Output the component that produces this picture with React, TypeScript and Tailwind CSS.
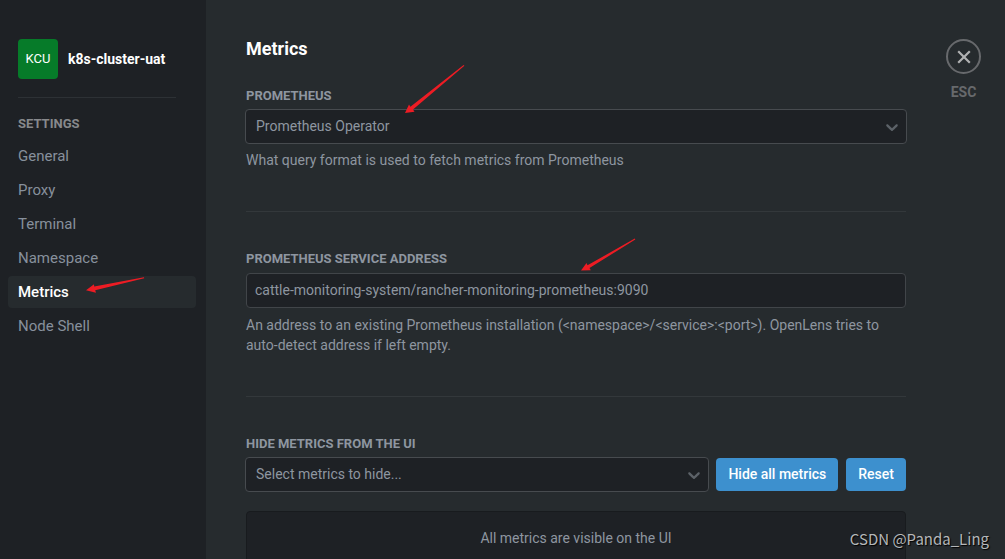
import { useState } from "react";

const navItems = ["General", "Proxy", "Terminal", "Namespace", "Metrics", "Node Shell"];

const Chevron = () => (
    <svg className="absolute right-[5px] top-2 size-5 pointer-events-none fill-[#5c6268]" viewBox="0 0 20 20" aria-hidden="true">
        <path d="M4.516 7.548c0.436-0.446 1.043-0.481 1.576 0l3.908 3.747 3.908-3.747c0.533-0.481 1.141-0.446 1.574 0 0.436 0.445 0.408 1.197 0 1.615-0.406 0.418-4.695 4.502-4.695 4.502-0.217 0.223-0.502 0.335-0.787 0.335s-0.57-0.112-0.789-0.335c0 0-4.287-4.084-4.695-4.502s-0.436-1.17 0-1.615z" />
    </svg>
);

const labelClass = "block text-[13px] leading-4 font-bold uppercase mb-1.5";
const selectClass = "block w-full h-[35px] px-2.5 pb-0.5 appearance-none rounded border border-[#474b4f] bg-[#1e2125] text-sm outline-none";
const buttonClass = "h-[33px] px-3 pb-px rounded-sm bg-[#3d90ce] text-white font-medium";

const Sidebar = ({ active, onSelect }: { active: string; onSelect: (item: string) => void }) => (
    <aside className="w-[206px] shrink-0 bg-[#1e2125] px-2">
        <div className="mx-2.5 mt-[39px] flex items-center gap-2.5">
            <div className="size-10 rounded bg-[#067b29] text-white text-[13px] flex items-center justify-center">KCU</div>
            <div className="text-sm font-bold text-white">k8s-cluster-uat</div>
        </div>
        <hr className="ml-2.5 mr-[22px] mt-[18px] border-[#2d3135]" />
        <h2 className="ml-2.5 mt-[18px] mb-2 text-[13px] leading-4 font-bold uppercase text-[#87898c]">Settings</h2>
        <nav className="flex flex-col gap-0.5 mr-0.5">
            {navItems.map((item) => (
                <button
                    key={item}
                    onClick={() => onSelect(item)}
                    className={`h-8 px-2.5 pt-0.5 rounded text-left text-[15px] ${
                        item === active ? "bg-[#262b2e] text-white font-medium" : "text-[#87909c]"
                    }`}
                >
                    {item}
                </button>
            ))}
        </nav>
    </aside>
);

const App = () => {
    const [active, setActive] = useState("Metrics");
    const [address, setAddress] = useState("cattle-monitoring-system/rancher-monitoring-prometheus:9090");

    return (
        <div className="relative h-screen overflow-hidden flex bg-[#262b2e] text-sm text-[#8e96a0] font-['Roboto',sans-serif]">
            <Sidebar active={active} onSelect={setActive} />

            <main className="grow min-w-0 pl-10 pt-[37px]">
                <h1 className="text-lg leading-6 font-bold text-white mb-[27px]">Metrics</h1>

                <section>
                    <label htmlFor="provider" className={labelClass}>Prometheus</label>
                    <div className="relative -m-px">
                        <select id="provider" className={selectClass}>
                            <option>Prometheus Operator</option>
                        </select>
                        <Chevron />
                    </div>
                    <p className="mt-[7px] leading-5">What query format is used to fetch metrics from Prometheus</p>
                </section>

                <hr className="mt-[41px] mb-[39px] border-[#33383b]" />

                <section>
                    <label htmlFor="address" className={labelClass}>Prometheus service address</label>
                    <input
                        id="address"
                        value={address}
                        onChange={(e) => setAddress(e.target.value)}
                        className="block w-full h-[35px] px-2 pb-0.5 rounded-sm border border-[#414549] bg-[#1e2125] outline-none"
                    />
                    <p className="mt-[7px] leading-5">
                        An address to an existing Prometheus installation (&lt;namespace&gt;/&lt;service&gt;:&lt;port&gt;). OpenLens tries to
                        auto-detect address if left empty.
                    </p>
                </section>

                <hr className="mt-[41px] mb-[39px] border-[#33383b]" />

                <section>
                    <label htmlFor="hidden-metrics" className={labelClass}>Hide metrics from the UI</label>
                    <div className="flex gap-2">
                        <div className="relative grow -m-px">
                            <select id="hidden-metrics" className={selectClass}>
                                <option>Select metrics to hide...</option>
                            </select>
                            <Chevron />
                        </div>
                        <button className={buttonClass}>Hide all metrics</button>
                        <button className={buttonClass}>Reset</button>
                    </div>
                    <div className="mt-5 py-4 rounded border border-[#181b1e] bg-[#1e2125] text-center leading-5">
                        All metrics are visible on the UI
                    </div>
                </section>
            </main>

            <div className="w-[99px] shrink-0 pt-[39px] pl-4 flex flex-col items-center gap-2.5">
                <button aria-label="Close" className="size-[35px] rounded-full border-2 border-[#67696c] flex items-center justify-center">
                    <svg className="size-5 stroke-[#b0b1b2]" viewBox="0 0 20 20" fill="none" strokeWidth="2.2">
                        <path d="M4.200 4.200l11.600 11.600M15.800 4.200L4.200 15.800" />
                    </svg>
                </button>
                <span className="text-sm leading-4 font-bold text-[#67696c]">ESC</span>
            </div>

            {/* callout arrows */}
            <svg className="absolute left-0 top-0 w-[1005px] h-[559px] pointer-events-none fill-[#ed1c24]" viewBox="0 0 1005 559" aria-hidden="true">
                <path d="M405 113l4-8.500 1.400 2.200L463.600 65l.8.8L413 109.600l1.500 2.200z" />
                <path d="M581 270.500l5.500-7.500 1 2.300L634.800 238.600l.5.900L589.500 268l1.300 2.200z" />
                <path d="M86 290.300l8-6 .2 2.300L144 277.300l.2 1L95.200 290.300l.8 2.500z" />
            </svg>

            <div className="absolute right-4 bottom-2 text-[15px] leading-6 text-[#b5b7b9] font-['Noto_Sans_CJK_SC',sans-serif] [text-shadow:1px_1px_1px_#000]">
                CSDN @Panda_Ling
            </div>
        </div>
    );
};

export default App;
